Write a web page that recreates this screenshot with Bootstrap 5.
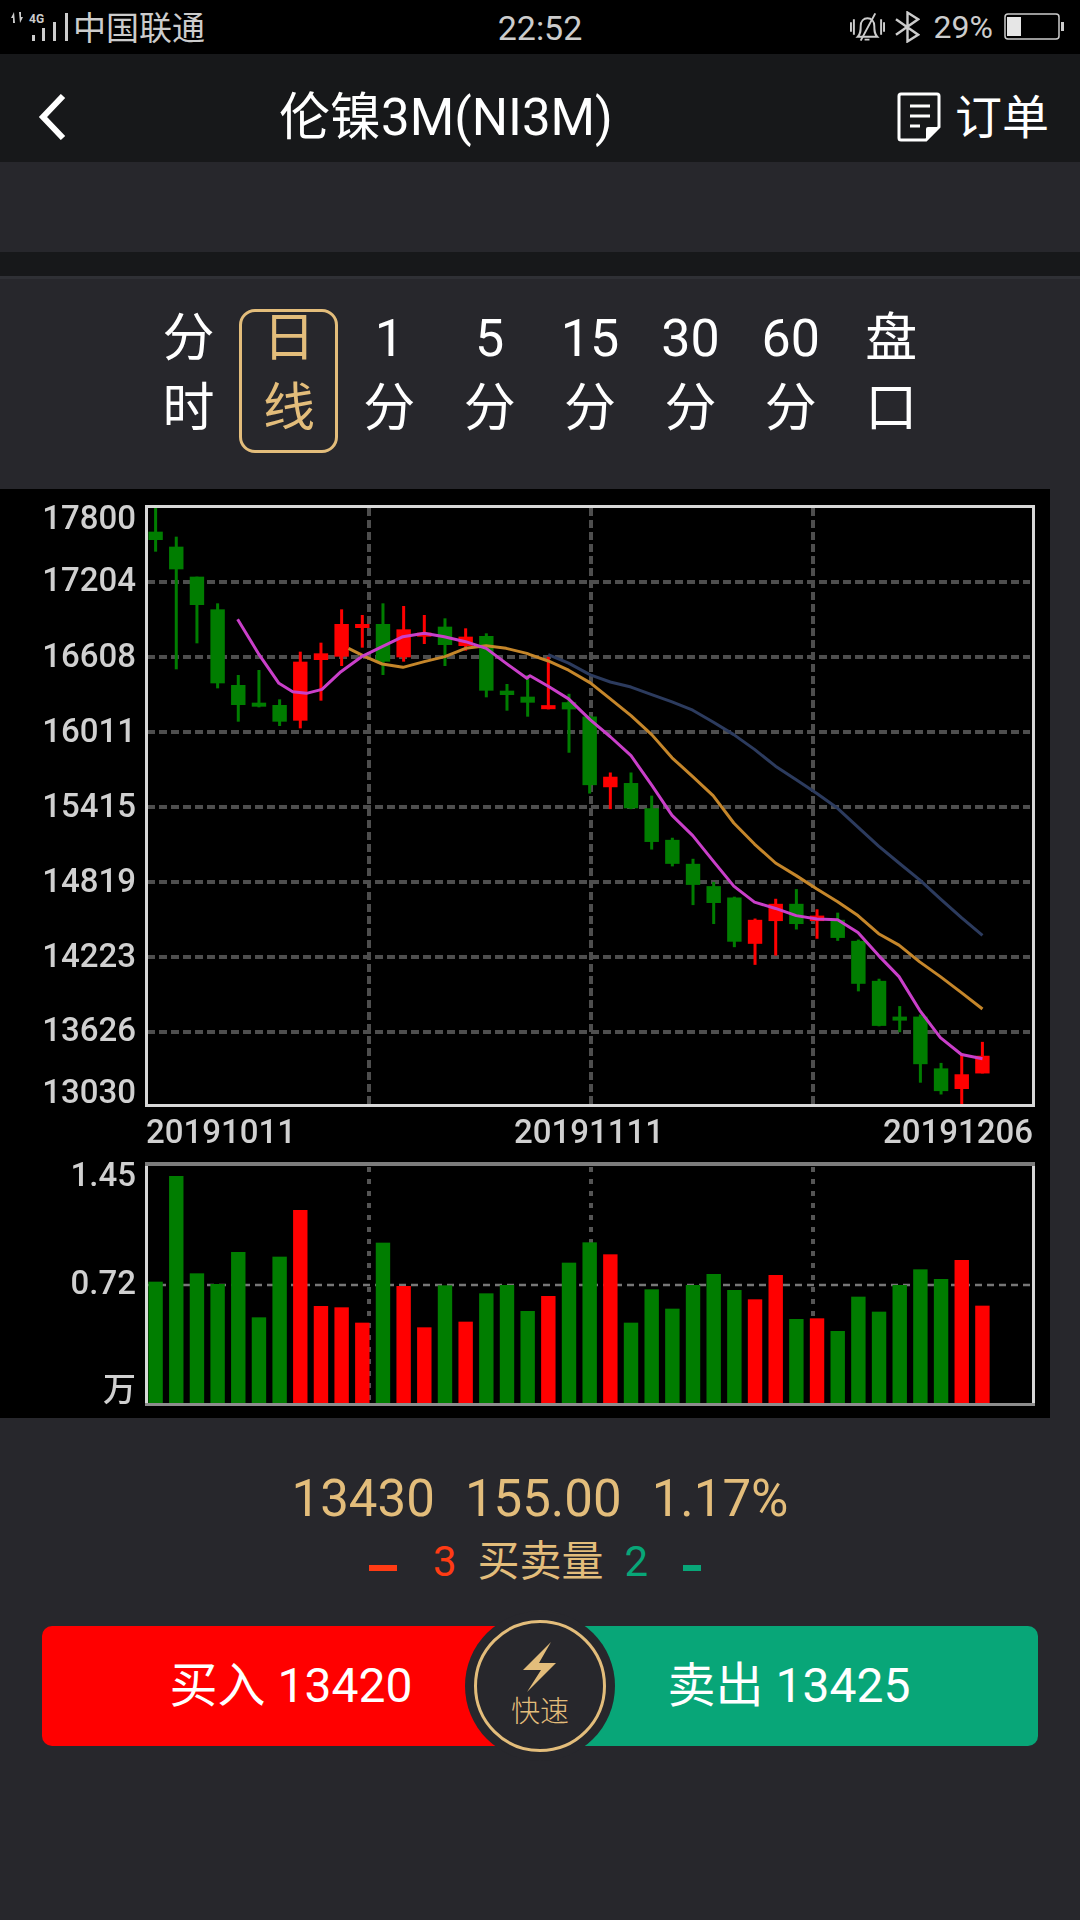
<!doctype html>
<html lang="zh-CN">

<head>
    <meta charset="UTF-8" />
    <meta name="viewport" content="width=device-width, initial-scale=1" />
    <title>伦镍3M(NI3M)</title>
    <link href="https://cdn.jsdelivr.net/npm/bootstrap@5.3.3/dist/css/bootstrap.min.css" rel="stylesheet">
    <style>
        body {
            background-color: #27272c;
            font-family: Roboto, "Noto Sans CJK SC", sans-serif;
            width: 1080px;
            height: 1920px;
            overflow: hidden;
        }

        .status-bar {
            height: 54px;
            background: #000;
            color: #ccc;
            font-size: 32px;
            line-height: 1;
        }

        .status-side {
            flex: 1 1 0;
        }

        .status-right {
            gap: 11px;
        }

        .status-right svg:last-child {
            margin-right: 16px;
        }

        .status-carrier {
            font-size: 33px;
            margin-top: 2px;
        }

        .status-time {
            font-size: 34px;
            margin-top: 2px;
        }

        .top-bar {
            height: 108px;
            background: #17181a;
            color: #fff;
            padding: 18px 31px 0 38px;
        }

        .top-title {
            font-size: 51px;
            line-height: 1;
            margin-left: 213px;
        }

        .order-link {
            font-size: 47px;
            line-height: 1;
            color: #fff;
            text-decoration: none;
            gap: 14px;
        }

        .blank-band {
            height: 90px;
        }

        .dark-strip {
            height: 27px;
            background: #17181a;
            border-bottom: 3px solid #2f3035;
        }

        .period-tabs {
            padding: 30px 0 36px 139px;
        }

        .period-tab {
            width: 99px;
            height: 144px;
            margin-right: 1.4px;
            color: #fff;
            font-size: 52px;
            line-height: 70px;
            text-align: center;
            text-decoration: none;
            border: 3px solid transparent;
            border-radius: 16px;
        }

        .period-tab span {
            display: block;
            margin-top: -8px;
        }

        .period-tab.is-active {
            color: #e3bd7b;
            border-color: #e3bd7b;
        }

        .chart-panel {
            display: block;
            width: 1050px;
            height: 929px;
            background: #000;
            filter: blur(0.6px);
        }

        .chart-panel text {
            fill: #d0d0d0;
            font-family: Roboto, "Noto Sans CJK SC", sans-serif;
            font-size: 33px;
            font-weight: 500;
            dominant-baseline: central;
        }

        .quote-line {
            margin-top: 52px;
            color: #e3bd7b;
            font-size: 51px;
            line-height: 58px;
            gap: 30px;
        }

        .volume-line {
            margin-top: 9px;
            height: 50px;
            padding-right: 10px;
            color: #e3bd7b;
            font-size: 42px;
            line-height: 50px;
        }

        .tick-red {
            display: block;
            width: 28px;
            height: 6px;
            margin-top: 12px;
            margin-right: 36px;
            background: #ff3b14;
        }

        .tick-green {
            display: block;
            width: 18px;
            height: 6px;
            margin-top: 12px;
            margin-left: 35px;
            background: #08a678;
        }

        .num-red {
            color: #ff3b14;
            margin-right: 21px;
        }

        .num-green {
            color: #08a678;
            margin-left: 21px;
        }

        .trade-row {
            margin: 39px 42px 0;
            height: 120px;
        }

        .trade-btn {
            flex: 1 1 0;
            height: 120px;
            border: 0;
            color: #fff;
            font-size: 48px;
            line-height: 118px;
            padding: 0;
        }

        .trade-buy {
            background: #f00;
            border-radius: 10px 0 0 10px;
        }

        .trade-sell {
            background: #08a678;
            border-radius: 0 10px 10px 0;
        }

        .quick-outer {
            position: absolute;
            left: 423px;
            top: -15px;
            width: 150px;
            height: 150px;
            border-radius: 50%;
            background: #27272c;
        }

        .quick-ring {
            width: 132px;
            height: 132px;
            border: 3px solid #e3bd7b;
            border-radius: 50%;
            color: #e3bd7b;
            font-size: 29px;
            font-weight: 300;
            line-height: 30px;
        }

        .quick-bolt {
            margin-top: 19px;
            margin-bottom: 5px;
        }

        .bt-icon {
            margin-right: 3px;
            margin-left: -1px;
        }
    </style>
</head>

<body>
    <div class="status-bar d-flex align-items-center">
        <div class="status-side d-flex align-items-center">
            <svg class="ms-2" width="65" height="54" viewBox="8 0 65 54" fill="#ccc">
                <path d="M14 12 11 18h2v5h2zM20 23l3-6h-2v-5h-2z"/>
                <text x="29" y="23" font-family="Roboto" font-size="12" font-weight="700">4G</text>
                <rect x="32" y="35" width="3" height="6"/>
                <rect x="42" y="28" width="3" height="13"/>
                <rect x="53" y="22" width="3" height="19"/>
                <rect x="65" y="13" width="3" height="28"/>
            </svg>
            <span class="status-carrier">中国联通</span>
        </div>
        <div class="status-time">22:52</div>
        <div class="status-side status-right d-flex align-items-center justify-content-end">
            <svg width="35" height="32" viewBox="0 0 36 32" fill="none" stroke="#ccc" stroke-width="2">
                <path d="M1 11v10M4 8v16M32 8v16M35 11v10"/>
                <path d="M8 26c3-3 3-6 3-11 0-5 3-8 7-8s7 3 7 8c0 5 0 8 3 11z"/>
                <path d="M15 29h5M26 2 11 30"/>
            </svg>
            <svg class="bt-icon" width="25" height="32" viewBox="0 0 26 32" fill="none" stroke="#ccc" stroke-width="2.500">
                <path d="M1 8l23 16-11 7V1l11 7L1 24"/>
            </svg>
            <span>29%</span>
            <svg width="60" height="28" viewBox="0 0 60 28">
                <rect x="1" y="1" width="54" height="25" rx="3" fill="none" stroke="#ccc" stroke-width="1.500"/>
                <rect x="3" y="4" width="14" height="19" fill="#e6e6e6"/>
                <rect x="57" y="9" width="3" height="9" fill="#ccc"/>
            </svg>
        </div>
    </div>

    <div class="top-bar d-flex align-items-center">
        <svg width="28" height="46" viewBox="0 0 28 46" fill="none" stroke="#fff" stroke-width="6">
            <path d="M25 2 5 23l20 21"/>
        </svg>
        <div class="top-title">伦镍3M(NI3M)</div>
        <a class="order-link ms-auto d-flex align-items-center" href="#">
            <svg width="44" height="50" viewBox="0 0 44 50" fill="none" stroke="#fff" stroke-width="3">
                <path d="M4 2h36a2 2 0 0 1 2 2v31L29 48H4a2 2 0 0 1-2-2V4a2 2 0 0 1 2-2z"/>
                <path d="M13 14h20M13 24h20M13 34h10"/>
                <path d="M42 35H31a2 2 0 0 0-2 2v11z" fill="#fff" stroke="none"/>
            </svg>
            <span>订单</span>
        </a>
    </div>

    <div class="blank-band"></div>
    <div class="dark-strip"></div>

    <div class="period-tabs d-flex">
        <a class="period-tab" href="#"><span>分<br>时</span></a>
        <a class="period-tab is-active" href="#"><span>日<br>线</span></a>
        <a class="period-tab" href="#"><span>1<br>分</span></a>
        <a class="period-tab" href="#"><span>5<br>分</span></a>
        <a class="period-tab" href="#"><span>15<br>分</span></a>
        <a class="period-tab" href="#"><span>30<br>分</span></a>
        <a class="period-tab" href="#"><span>60<br>分</span></a>
        <a class="period-tab" href="#"><span>盘<br>口</span></a>
    </div>

    <svg class="chart-panel" viewBox="0 489 1050 929">
        <g id="plot"></g>
        <g text-anchor="end">
            <text x="136" y="517">17800</text>
            <text x="136" y="579">17204</text>
            <text x="136" y="655">16608</text>
            <text x="136" y="730">16011</text>
            <text x="136" y="805">15415</text>
            <text x="136" y="880">14819</text>
            <text x="136" y="955">14223</text>
            <text x="136" y="1029">13626</text>
            <text x="136" y="1091">13030</text>
            <text x="136" y="1174">1.45</text>
            <text x="136" y="1282">0.72</text>
            <text x="136" y="1389">万</text>
        </g>
        <text x="146" y="1131">20191011</text>
        <text x="589" y="1131" text-anchor="middle">20191111</text>
        <text x="1033" y="1131" text-anchor="end">20191206</text>
    </svg>

    <div class="quote-line d-flex justify-content-center">
        <span>13430</span>
        <span>155.00</span>
        <span>1.17%</span>
    </div>
    <div class="volume-line d-flex justify-content-center align-items-center">
        <span class="tick-red"></span>
        <span class="num-red">3</span>
        <span>买卖量</span>
        <span class="num-green">2</span>
        <span class="tick-green"></span>
    </div>

    <div class="trade-row d-flex position-relative">
        <button class="trade-btn trade-buy">买入 13420</button>
        <button class="trade-btn trade-sell">卖出 13425</button>
        <div class="quick-outer d-flex align-items-center justify-content-center">
            <div class="quick-ring d-flex flex-column align-items-center">
                <svg class="quick-bolt" width="34" height="50" viewBox="0 0 34 50" fill="#e3bd7b">
                    <path d="M28 0 0 28h18L4 50 33 21H16z"/>
                </svg>
                <span>快速</span>
            </div>
        </div>
    </div>

    <script src="https://cdn.jsdelivr.net/npm/bootstrap@5.3.3/dist/js/bootstrap.bundle.min.js"></script>
    <script>
        const GREEN = "#007d00";
        const RED = "#ff0000";
        const step = 20.67;
        const startX = 155.6;

        // kind, wick top, wick bottom, body top, body bottom (read off the 3x crops)
        const firstCandles = [
            ["g", 75, 215, 155, 180], ["g", 170, 568, 200, 268], ["g", 290, 490, 290, 375], ["g", 370, 625, 388, 610],
            ["g", 585, 725, 615, 675], ["g", 570, 682, 668, 678], ["g", 658, 738, 675, 725], ["r", 515, 745, 545, 722],
            ["r", 488, 662, 520, 540], ["r", 388, 558, 432, 530], ["r", 405, 503, 432, 442], ["g", 370, 585, 432, 545],
            ["r", 378, 545, 448, 532], ["r", 405, 492, 458, 468], ["g", 415, 558, 440, 495], ["r", 445, 512, 470, 498],
            ["g", 460, 652, 468, 632], ["g", 612, 692, 632, 645], ["g", 585, 710, 650, 668]
        ];
        const lastCandles = [
            ["r", 420, 545, 535, 543], ["g", 508, 648, 528, 545], ["g", 560, 745, 562, 725], ["r", 695, 782, 705, 730],
            ["g", 695, 782, 720, 780], ["g", 750, 878, 780, 860], ["g", 850, 918, 855, 912], ["g", 900, 1010, 912, 962],
            ["g", 955, 1055, 965, 1005], ["g", 990, 1110, 992, 1097], ["r", 1042, 1152, 1045, 1102], ["r", 995, 1130, 1007, 1048],
            ["g", 972, 1068, 1007, 1055], ["r", 1020, 1090, 1035, 1048], ["g", 1028, 1095, 1045, 1088], ["g", 1092, 1215, 1095, 1197],
            ["g", 1185, 1298, 1190, 1297], ["g", 1250, 1312, 1275, 1282], ["g", 1270, 1432, 1275, 1388], ["g", 1385, 1460, 1398, 1452],
            ["r", 1362, 1488, 1412, 1447], ["r", 1335, 1410, 1368, 1410]
        ];
        const candles = [
            ...firstCandles.map(c => [c[0], ...c.slice(1).map(v => 480 + v / 3)]),
            ...lastCandles.map(c => [c[0], ...c.slice(1).map(v => 480 + v / 2.376)])
        ];

        const volumes = [
            ["g", 545], ["g", 228], ["g", 520], ["g", 552], ["g", 456], ["g", 652], ["g", 470], ["r", 330], ["r", 618], ["r", 622], ["r", 668],
            ["g", 428], ["r", 558], ["r", 682], ["g", 556], ["r", 665], ["g", 580], ["g", 555], ["g", 633], ["r", 588], ["g", 488], ["g", 427],
            ["r", 463], ["g", 668], ["g", 568], ["g", 626], ["g", 555], ["g", 522], ["g", 570], ["r", 598], ["r", 525], ["g", 657], ["r", 655],
            ["g", 693], ["g", 590], ["g", 635], ["g", 555], ["g", 508], ["g", 537], ["r", 480], ["r", 617]
        ];

        const left = (x, y) => [x / 2.904, 480 + y / 3];
        const right = (x, y) => [530 + x / 2.851, 480 + y / 2.376];
        const pts = (fn, list) => list.map(p => fn(p[0], p[1]));

        const ma5 = [
            ...pts(left, [[690, 418], [750, 520], [810, 610], [850, 635], [890, 640], [935, 628], [990, 575], [1050, 530], [1110, 500], [1170, 470], [1232, 460], [1290, 470], [1352, 485], [1412, 505], [1470, 550], [1530, 595]]),
            ...pts(right, [[0, 465], [52, 490], [110, 520], [172, 570], [229, 610], [288, 655], [347, 725], [405, 797], [464, 845], [522, 905], [581, 965], [640, 1003], [700, 1018], [759, 1035], [818, 1043], [877, 1045], [935, 1075], [994, 1130], [1052, 1180], [1111, 1260], [1170, 1325], [1230, 1365], [1290, 1375]])
        ];
        const ma10 = [
            ...pts(left, [[1012, 505], [1060, 530], [1110, 552], [1170, 562], [1232, 545], [1292, 530], [1352, 505], [1412, 497], [1470, 505], [1530, 520]]),
            ...pts(right, [[0, 415], [52, 430], [110, 452], [172, 482], [229, 520], [288, 560], [347, 605], [405, 660], [464, 705], [522, 750], [581, 815], [640, 865], [700, 910], [759, 940], [818, 972], [877, 1002], [935, 1035], [994, 1078], [1052, 1105], [1111, 1145], [1170, 1180], [1230, 1218], [1290, 1257]])
        ];
        const ma20 = pts(right, [[52, 415], [110, 435], [172, 463], [229, 480], [288, 492], [347, 510], [405, 527], [464, 547], [522, 575], [581, 605], [640, 640], [700, 680], [759, 712], [818, 745], [877, 780], [935, 825], [994, 870], [1052, 910], [1111, 950], [1170, 995], [1230, 1040], [1290, 1082]]);

        function line(x1, y1, x2, y2, color, width, dash) {
            return `<line x1="${x1}" y1="${y1}" x2="${x2}" y2="${y2}" stroke="${color}" stroke-width="${width}"${dash ? ` stroke-dasharray="${dash}"` : ""}/>`;
        }

        function rect(x, y, w, h, color) {
            return `<rect x="${x}" y="${y}" width="${w}" height="${h}" fill="${color}"/>`;
        }

        let svg = "";

        // main chart grid
        for (let y = 582; y <= 1032; y += 75) svg += line(147, y, 1030, y, "#4e4e4e", 4, "8 4");
        [369, 591, 813].forEach(x => {
            svg += line(x, 508, x, 1104, "#4e4e4e", 4, "8 4");
        });

        candles.forEach((c, i) => {
            const x = startX + i * step;
            const color = c[0] === "g" ? GREEN : RED;
            svg += rect(x - 1.5, c[1], 3, c[2] - c[1], color);
            svg += rect(x - 7.2, c[3], 14.4, Math.max(c[4] - c[3], 4), color);
        });

        [[ma20, "#2c3b5e", 3], [ma10, "#c5862a", 3], [ma5, "#c93fc9", 3]].forEach(([points, color, width]) => {
            svg += `<polyline points="${points.map(p => p.join(",")).join(" ")}" fill="none" stroke="${color}" stroke-width="${width}" stroke-linejoin="round"/>`;
        });

        svg += `<rect x="146.500" y="506.500" width="887" height="599" fill="none" stroke="#d8d8d8" stroke-width="3"/>`;

        // volume chart
        svg += line(147, 1285, 1030, 1285, "#777", 2.5, "7 5");
        [369, 591, 813].forEach(x => {
            svg += line(x, 1167, x, 1402, "#555", 4, "5 7");
        });
        volumes.forEach((v, i) => {
            const top = 1100 + v[1] / 3;
            svg += rect(startX + i * step - 7.2, top, 14.4, 1403 - top, v[0] === "g" ? GREEN : RED);
        });
        svg += line(146.5, 1163, 146.5, 1405, "#d8d8d8", 3);
        svg += line(1033.5, 1163, 1033.5, 1405, "#d8d8d8", 3);
        svg += line(145, 1164, 1035, 1164, "#7c7c7c", 4);
        svg += line(145, 1404.5, 1035, 1404.5, "#8c8c8c", 3);

        document.getElementById("plot").innerHTML = svg;
    </script>
</body>

</html>
